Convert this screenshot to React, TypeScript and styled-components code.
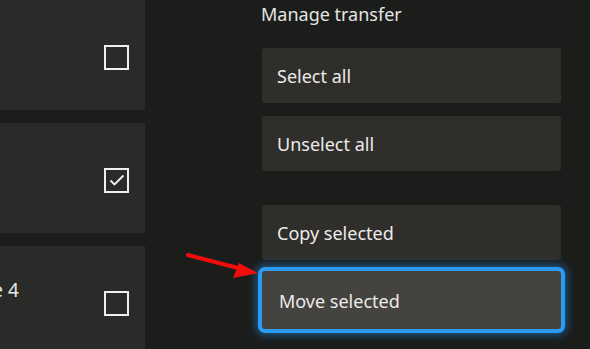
import styled, { createGlobalStyle } from 'styled-components'

const GlobalStyle = createGlobalStyle`
  html, body {
    margin: 0;
    padding: 0;
    background: #1b1d1b;
    overflow: hidden;
  }
  body {
    font-family: "Noto Sans", "Open Sans", sans-serif;
    color: #e6e6e4;
  }
`

const GAMES = [
  { title: 'Halo 5', checked: false },
  { title: 'Gears 5', checked: true },
  { title: 'Just Cause 4', checked: false },
]

const App = () => {
  return (
    <Screen>
      <GlobalStyle />
      <GameList>
        {GAMES.map((game) => (
          <GameCard key={game.title}>
            <GameTitle>{game.title}</GameTitle>
            <CheckBox>
              {game.checked && (
                <svg width="16" height="12" viewBox="0 0 16 12">
                  <path d="M1.5 6.5 L5.5 10.5 L14.5 1.5" fill="none" stroke="#f2f2f2" strokeWidth="1.8" />
                </svg>
              )}
            </CheckBox>
          </GameCard>
        ))}
      </GameList>

      <Panel>
        <PanelTitle>Manage transfer</PanelTitle>
        <ActionGroup>
          <ActionButton>Select all</ActionButton>
          <ActionButton>Unselect all</ActionButton>
        </ActionGroup>
        <ActionGroup $second>
          <ActionButton>Copy selected</ActionButton>
          <FocusWrap>
            <Arrow width="74" height="30" viewBox="0 0 74 30">
              <line x1="2" y1="2" x2="56" y2="16" stroke="#f20d0d" strokeWidth="4" strokeLinecap="round" />
              <polygon points="72,20 53,10 47,25" fill="#f20d0d" />
            </Arrow>
            <ActionButton $focused>Move selected</ActionButton>
          </FocusWrap>
        </ActionGroup>
      </Panel>
    </Screen>
  )
}

export default App

const Screen = styled.div`
  display: flex;
  width: 590px;
  height: 349px;
  overflow: hidden;
`

const GameList = styled.div`
  display: flex;
  flex-direction: column;
  gap: 13px;
  width: 300px;
  margin-left: -155px;
  flex-shrink: 0;
`

const GameCard = styled.div`
  display: flex;
  align-items: center;
  justify-content: space-between;
  height: 110px;
  flex-shrink: 0;
  padding: 0 16px 0 66px;
  box-sizing: border-box;
  background: #292b29;
`

const GameTitle = styled.span`
  font-size: 19px;
  color: #e8e8e6;
  margin-top: -22px;
`

const CheckBox = styled.div`
  width: 25px;
  height: 25px;
  box-sizing: border-box;
  border: 2px solid #efefef;
  display: flex;
  align-items: center;
  justify-content: center;
  margin-top: 4px;
`

const Panel = styled.div`
  display: flex;
  flex-direction: column;
  padding: 2px 0 0 117px;
  width: 299px;
`

const PanelTitle = styled.div`
  font-size: 18px;
  color: #e4e4e2;
  margin-left: -1px;
  line-height: 24px;
  margin-bottom: 22px;
`

const ActionGroup = styled.div<{ $second?: boolean }>`
  display: flex;
  flex-direction: column;
  gap: ${(p) => (p.$second ? '7px' : '13px')};
  margin-top: ${(p) => (p.$second ? '34px' : '0')};
`

const FocusWrap = styled.div`
  position: relative;
  margin: 0 -4px;
`

const Arrow = styled.svg`
  position: absolute;
  left: -72px;
  top: -14px;
`

const ActionButton = styled.div<{ $focused?: boolean }>`
  display: flex;
  align-items: center;
  box-sizing: border-box;
  height: ${(p) => (p.$focused ? '66px' : '55px')};
  padding-left: ${(p) => (p.$focused ? '17px' : '15px')};
  padding-top: ${(p) => (p.$focused ? '2px' : '0')};
  font-size: 18px;
  color: #ecebe9;
  background: ${(p) => (p.$focused ? '#44433f' : '#2f2e2b')};
  border-radius: ${(p) => (p.$focused ? '7px' : '3px')};
  border: ${(p) => (p.$focused ? '4px solid #2d9cf0' : 'none')};
  box-shadow: ${(p) => (p.$focused ? '0 0 8px 2px rgba(30, 140, 240, 0.55)' : 'none')};
`
